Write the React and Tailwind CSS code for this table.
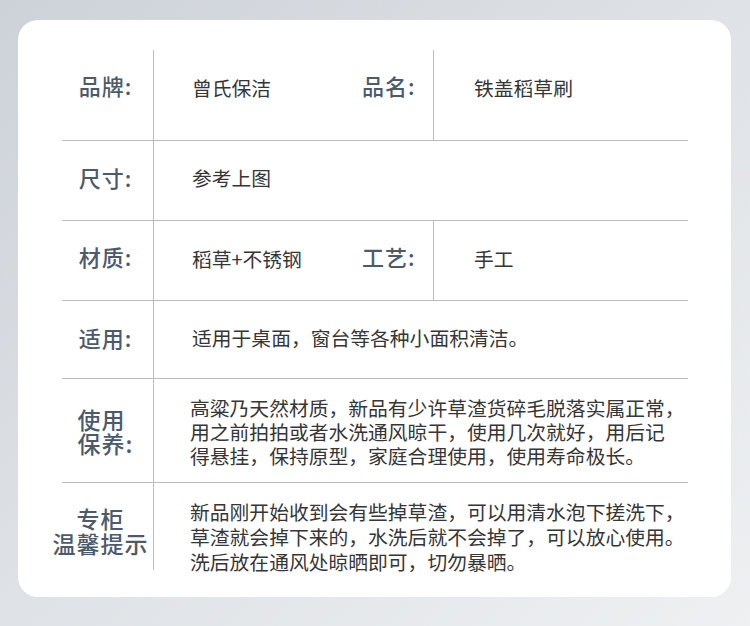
import React from 'react';

const font = { fontFamily: '"Noto Sans CJK SC", "Noto Sans", sans-serif' };

const Label = ({ children, className = '' }) => (
  <div className={`flex w-[92px] shrink-0 items-center justify-center border-r border-[#bdbdbd] pr-[4px] ${className}`}>
    <div className="whitespace-nowrap pb-[5px] text-[22px] font-medium tracking-[1px] text-[#4b5a6c]">{children}</div>
  </div>
);

const Value = ({ children, className = '' }) => (
  <div className={`flex items-center whitespace-nowrap pl-[38px] text-[19.8px] text-[#363636] ${className}`}>
    {children}
  </div>
);

const PairRow = ({ h, label, value, label2, value2, pad = '' }) => (
  <div className={`flex ${h}`}>
    <Label className={pad}>{label}</Label>
    <Value className={`w-[208px] ${pad}`}>{value}</Value>
    <div className={`flex w-[72px] items-center border-r border-[#bdbdbd] ${pad}`}>
      <span className="whitespace-nowrap pb-[5px] text-[22px] font-medium tracking-[1px] text-[#4b5a6c]">{label2}</span>
    </div>
    <Value className={`flex-1 pl-[40px] ${pad}`}>{value2}</Value>
  </div>
);

export default function App() {
  return (
    <div
      style={font}
      className="h-[626px] w-[750px] overflow-hidden bg-gradient-to-br from-[#cdd2d9] via-[#dfe2e6] to-[#eef0f2] px-[18px] pt-[20px]"
    >
      <div className="h-[577px] w-[713px] rounded-[20px] bg-white px-[44px] pt-[30px]">
        <div className="flex w-[626px] flex-col">
          <PairRow
            h="h-[90px]"
            pad="pb-[14px]"
            label="品牌:"
            value="曾氏保洁"
            label2="品名:"
            value2="铁盖稻草刷"
          />

          <div className="flex h-[80px] border-t border-[#bdbdbd]">
            <Label className="pb-[2px]">尺寸:</Label>
            <Value className="pb-[6px]">参考上图</Value>
          </div>

          <div className="border-t border-[#bdbdbd]">
            <PairRow
              h="h-[79px]"
              pad="pb-[4px]"
              label="材质:"
              value="稻草+不锈钢"
              label2="工艺:"
              value2="手工"
            />
          </div>

          <div className="flex h-[78px] border-t border-[#bdbdbd]">
            <Label>适用:</Label>
            <Value className="pb-[4px] pl-[37px]">适用于桌面，窗台等各种小面积清洁。</Value>
          </div>

          <div className="flex h-[104px] border-t border-[#bdbdbd]">
            <div className="flex w-[92px] shrink-0 items-center justify-center border-r border-[#bdbdbd] pr-[4px]">
              <div className="whitespace-nowrap text-[23px] font-medium leading-[24px] tracking-[1px] text-[#4b5a6c]">
                <div>使用</div>
                <div>保养:</div>
              </div>
            </div>
            <div className="flex items-center whitespace-nowrap pl-[36px] pt-[3px] text-[19.8px] leading-[24px] text-[#363636]">
              <div>
                <div>高粱乃天然材质，新品有少许草渣货碎毛脱落实属正常，</div>
                <div>用之前拍拍或者水洗通风晾干，使用几次就好，用后记</div>
                <div>得悬挂，保持原型，家庭合理使用，使用寿命极长。</div>
              </div>
            </div>
          </div>

          <div className="flex h-[88px] border-t border-[#bdbdbd]">
            <div className="flex w-[92px] shrink-0 items-center justify-center border-r border-[#bdbdbd] pr-[14px] pt-[8px]">
              <div className="whitespace-nowrap text-center text-[23px] font-medium leading-[25px] tracking-[1px] text-[#4b5a6c]">
                <div>专柜</div>
                <div>温馨提示</div>
              </div>
            </div>
            <div className="whitespace-nowrap pl-[36px] pt-[16px] text-[19.8px] leading-[25px] text-[#363636]">
              <div>新品刚开始收到会有些掉草渣，可以用清水泡下搓洗下，</div>
              <div>草渣就会掉下来的，水洗后就不会掉了，可以放心使用。</div>
              <div>洗后放在通风处晾晒即可，切勿暴晒。</div>
            </div>
          </div>
        </div>
      </div>
    </div>
  );
}
